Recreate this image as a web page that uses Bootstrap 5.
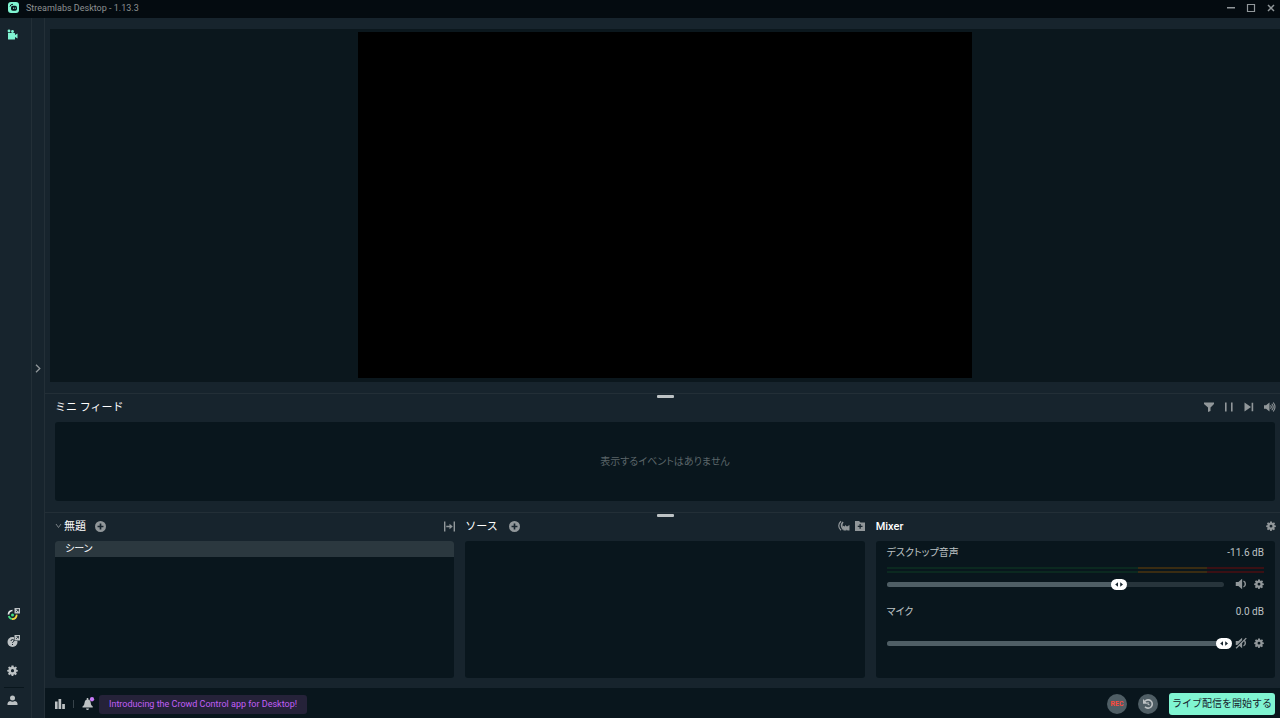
<!DOCTYPE html>
<html lang="ja" data-bs-theme="dark">
<head>
<meta charset="utf-8">
<meta name="viewport" content="width=device-width, initial-scale=1">
<title>Streamlabs Desktop - 1.13.3</title>
<link href="https://cdn.jsdelivr.net/npm/bootstrap@5.3.0/dist/css/bootstrap.min.css" rel="stylesheet">
<style>
:root{--bg:#17242d;--section:#09161d;--line:#232f37;--icon:#91979a;--teal:#80f5d2}
body{background:var(--bg);color:#bdc2c4;font:10px/14px Roboto,"Noto Sans CJK JP",sans-serif;font-feature-settings:"palt"}
svg{display:block;fill:currentColor}
.titlebar{height:18px;background:#040b10;color:#8d9192;padding:0 4px 3px 8px;font-size:9px}
.app-name{margin-left:7px}
.window-buttons{gap:10px}
.icon-btn{border:0;padding:0;background:none;color:var(--icon);display:block;line-height:0}
.icon-btn:hover{color:#fff}
.side-nav{width:32px;border-right:1px solid var(--line);padding:11px 0 12px 7px}
.side-nav .icon-btn{color:#bdc2c4}
.side-nav .icon-btn.current{color:var(--teal)}
.side-nav .lower{gap:13px}
.side-nav hr{width:20px;margin:11px 0 7px -3px;border-top:1px solid #09161d;opacity:1}
.dock{width:13px;border-right:1px solid var(--line)}
.preview{background:#0b171d;margin:11px 0 11px 5px;padding:3px 0 4px}
.screen{height:100%;aspect-ratio:614/346;background:#000}
.panel{border-top:1px solid var(--line);padding:0 5px 0 10px}
.grip{width:17px;height:3px;border-radius:1px;background:#bdc2c4;left:50%;top:1px;margin-left:-6px}
.panel-head{height:28px;padding-bottom:2px;margin-right:-1px}
.panel-head h2{font-size:11px;line-height:16px;margin:0;padding-top:2px;color:#fff;font-weight:400;font-feature-settings:normal}
.panel-head h2.latin{font-weight:500}
.feed-tools{gap:8px}
.box{background:var(--section);border-radius:3px}
.feed{height:79px;color:#5b6569}
.docks{gap:11px;margin-top:11px;padding-bottom:10px}
.docks>section{flex:1 1 0;min-width:0}
.docks .box{height:137px}
.scene-item{display:block;background:#2b383f;color:#fff;padding:0 10px;line-height:16px;text-decoration:none;border-radius:3px 3px 0 0}
.mixer{padding:5px 11px 0}
.meters{display:grid;gap:2px;margin:7px 0 5px}
.meter{height:2px;background:linear-gradient(90deg,#0b2920 66.6%,#3a2c12 66.6% 85%,#3a1014 85%)}
.slider-row .icon-btn:nth-child(2){margin:0 7px 0 11px}
.mic-block{margin-top:15px}
.mic-block .slider-row{margin-top:18px}
.level{height:12px}
.level-track{height:5px;border-radius:3px;background:#27343b}
.level-fill{height:5px;border-radius:3px;background:#4f5e65}
.level input{-webkit-appearance:none;appearance:none;background:none;left:-8px;top:0;width:calc(100% + 16px);height:12px;margin:0}
.level input::-webkit-slider-thumb{-webkit-appearance:none;width:16px;height:11px;border-radius:6px;background:#fff url("data:image/svg+xml,%3Csvg xmlns='http://www.w3.org/2000/svg' width='16' height='11'%3E%3Cpath fill='%2317242d' d='M7 3.2v4.6L4.2 5.5zM9.2 3.2v4.6L12 5.5z'/%3E%3C/svg%3E") center no-repeat}
.level input::-moz-range-thumb{width:16px;height:11px;border:0;border-radius:6px;background:#fff}
.bottom-bar{background:var(--section);padding:2px 5px 0 10px;height:30px}
.bottom-bar .icon-btn{color:#bdc2c4}
.news{background:#252239;color:#c15ff7;border-radius:3px;font-size:9px;line-height:19px;padding:0 10px;margin-left:4px;text-decoration:none}
.sep{width:1px;height:8px;background:#37434a}
.round-btn{width:20px;height:20px;border:0;padding:0;border-radius:50%;background:#4f5e65;color:#bdc2c4}
.round-btn.rec{color:#ff4a3c;font-size:7px;font-weight:700;line-height:20px}
.round-btn.replay{margin:0 11px}
.live-btn{height:22px;background:var(--teal);color:#17242d;border:0;border-radius:3px;padding:0 3px;line-height:22px}
</style>
</head>
<body class="vh-100 d-flex flex-column overflow-hidden">
<svg width="0" height="0" class="position-absolute" aria-hidden="true">
<symbol id="gear" viewBox="0 0 16 16"><path fill-rule="evenodd" d="M6.500 .8h3l.4 2 1.200.5L12.800 2.100 14.500 3.800l-1.300 1.800.5 1.200 2 .3v2.400l-2 .4-.5 1.200 1.200 1.800-1.900 1.900-1.800-1.200-1.200.5-.4 1.800H6.700l-.4-1.800-1.200-.5-1.800 1.200-1.900-1.900 1.200-1.800-.5-1.200-1.800-.4V7.100l1.900-.3.500-1.200L1.500 3.800l1.800-1.700 1.800 1.200 1.100-.5zM8 5.900a2.300 2.300 0 1 0 0 4.600 2.300 2.300 0 0 0 0-4.600z"/></symbol>
<symbol id="plus" viewBox="0 0 16 16"><path fill-rule="evenodd" d="M8 0a8 8 0 1 0 0 16A8 8 0 0 0 8 0zM6.800 3.700h2.400v3.100h3.100v2.400H9.200v3.100H6.800V9.200H3.700V6.800h3.100z"/></symbol>
<symbol id="speaker" viewBox="0 0 16 16"><path d="M1 5.200h3.500L9.500 1v14l-5-4.200H1z"/><path d="M11.300 4.200c3.300 1.200 3.300 6.400 0 7.600" fill="none" stroke="currentColor" stroke-width="1.900"/></symbol>
</svg>

<header class="titlebar d-flex align-items-center">
  <svg width="11" height="11" viewBox="0 0 22 22"><rect width="22" height="22" rx="6" fill="#80f5d2"/><path d="M4 9Q4.500 4.500 10 4.500" fill="none" stroke="#09161d" stroke-width="2"/><rect x="6" y="7.500" width="12" height="10" rx="3.500" fill="#09161d"/><path d="M11 11v3M14.500 11v3" stroke="#80f5d2" stroke-width="1.600"/></svg>
  <span class="app-name">Streamlabs Desktop - 1.13.3</span>
  <div class="window-buttons ms-auto d-flex">
    <button class="icon-btn" aria-label="最小化"><svg width="10" height="10"><path d="M1 4h8v1.500H1z"/></svg></button>
    <button class="icon-btn" aria-label="最大化"><svg width="10" height="10"><path d="M1.500 1.500h7v7h-7z" fill="none" stroke="currentColor" stroke-width="1.200"/></svg></button>
    <button class="icon-btn" aria-label="閉じる"><svg width="10" height="10"><path d="M2 2l6 6M8 2L2 8" stroke="currentColor" stroke-width="1.500"/></svg></button>
  </div>
</header>

<div class="d-flex flex-grow-1" style="min-height:0">
  <nav class="side-nav d-flex flex-column flex-shrink-0">
    <button class="icon-btn current" aria-label="エディター"><svg width="12" height="12" viewBox="0 0 24 24"><circle cx="4" cy="4" r="2.800"/><circle cx="11" cy="5" r="2.800"/><path d="M2 8h13q1 0 1 1v3l5-3v10l-5-3v4q0 1-1 1H3q-1 0-1-1z"/></svg></button>
    <div class="lower mt-auto d-flex flex-column align-items-start">
      <button class="icon-btn" aria-label="ダッシュボード"><svg width="14" height="14" viewBox="0 0 28 28"><path d="M3 15a8.500 8.500 0 0 1 8-8" fill="none" stroke="#e8eaea" stroke-width="3.500"/><path d="M3.500 18a8.500 8.500 0 0 0 7 6" fill="none" stroke="#42df80" stroke-width="3.500"/><path d="M10 24.200c5 0 9-3 9.500-9" fill="none" stroke="#f5d640" stroke-width="3.500"/><circle cx="11" cy="16" r="3" fill="#42df80"/><path d="M15 2h11v11H15z"/><path d="M18 10l5-5M19 5h4v4" fill="none" stroke="#17242d" stroke-width="1.500"/></svg></button>
      <button class="icon-btn" aria-label="ヘルプ"><svg width="14" height="14" viewBox="0 0 28 28"><circle cx="11" cy="16" r="10"/><path d="M8 14q0-3 3-3t3 2.500q0 1.500-3 3.500v1M11 20v2" fill="none" stroke="#17242d" stroke-width="2"/><path d="M14 1h13v13H14z" fill="#17242d"/><path d="M15 2h11v11H15z"/><path d="M18 10l5-5M19 5h4v4" fill="none" stroke="#17242d" stroke-width="1.500"/></svg></button>
      <button class="icon-btn mt-1" aria-label="設定"><svg width="11" height="11"><use href="#gear"/></svg></button>
    </div>
    <hr>
    <button class="icon-btn" aria-label="アカウント"><svg width="11" height="11" viewBox="0 0 22 22"><circle cx="11" cy="6" r="5"/><path d="M1 20v-3q0-4 5-5 5 3 10 0 5 1 5 5v3z"/></svg></button>
  </nav>
  <aside class="dock d-flex align-items-center justify-content-center flex-shrink-0">
    <button class="icon-btn" aria-label="開く"><svg width="6" height="9"><path d="M1 .8l3.800 3.700L1 8.200" fill="none" stroke="currentColor" stroke-width="1.300"/></svg></button>
  </aside>

  <main class="flex-grow-1 d-flex flex-column" style="min-width:0">
    <section class="preview flex-grow-1 d-flex justify-content-center" style="min-height:0"><div class="screen"></div></section>

    <section class="panel position-relative">
      <span class="grip position-absolute"></span>
      <div class="panel-head d-flex align-items-center">
        <h2>ミニ フィード</h2>
        <div class="feed-tools ms-auto d-flex">
          <button class="icon-btn" aria-label="フィルター"><svg width="12" height="12" viewBox="0 0 24 24"><path d="M2 3h20v3l-7 7v7l-5 2v-9L2 6z"/></svg></button>
          <button class="icon-btn" aria-label="一時停止"><svg width="12" height="12"><path d="M2 1.500h1.600v9H2zM8 1.500h1.600v9H8z"/></svg></button>
          <button class="icon-btn" aria-label="スキップ"><svg width="12" height="12"><path d="M1.500 1.500L8 6l-6.500 4.500zM8.600 1.800h1.600v8.400H8.600z"/></svg></button>
          <button class="icon-btn" aria-label="ミュート"><svg width="13" height="12" viewBox="0 0 26 24"><path d="M2 8.500h4l7-5.500v18l-7-5.500H2z"/><path d="M15 8.500q3 3.500 0 7M17.500 5.500q6 6.500 0 13M20.500 3q7 9 0 18" fill="none" stroke="currentColor" stroke-width="2.200"/></svg></button>
        </div>
      </div>
      <div class="box feed d-flex align-items-center justify-content-center">表示するイベントはありません</div>
    </section>

    <div class="panel docks d-flex position-relative">
      <span class="grip position-absolute"></span>
      <section>
        <div class="panel-head d-flex align-items-center">
          <button class="icon-btn" aria-label="シーンコレクション"><svg width="7" height="6"><path d="M1 1l2.500 3.500L6 1" fill="none" stroke="currentColor" stroke-width=".8"/></svg></button>
          <h2 style="margin:0 9px 0 2px">無題</h2>
          <button class="icon-btn" aria-label="シーンを追加"><svg width="11" height="11"><use href="#plus"/></svg></button>
          <button class="icon-btn ms-auto" aria-label="切り替え効果"><svg width="11" height="11" viewBox="0 0 22 22"><path d="M0 1h2.800v20H0zM19.200 1H22v20h-2.800zM4.500 9.600h6.500V5.500l6.500 5.500-6.500 5.500v-4.100H4.500z"/></svg></button>
        </div>
        <div class="box"><a class="scene-item" href="#">シーン</a></div>
      </section>
      <section>
        <div class="panel-head d-flex align-items-center">
          <h2 style="margin-right:11px">ソース</h2>
          <button class="icon-btn" aria-label="ソースを追加"><svg width="11" height="11"><use href="#plus"/></svg></button>
          <button class="icon-btn ms-auto me-1" aria-label="選択的録画"><svg width="13" height="12" viewBox="0 0 26 24"><path d="M8 2.500q-9 8.500 0 18" fill="none" stroke="currentColor" stroke-width="2.400"/><path d="M12 4q-6 7 1 15" fill="none" stroke="currentColor" stroke-width="3.200"/><path d="M11 11l5 2v-3l4 3 5-3v11h-4l-2-2v2h-6z"/></svg></button>
          <button class="icon-btn" aria-label="グループを追加"><svg width="12" height="12" viewBox="0 0 24 24"><path fill-rule="evenodd" d="M2 2h8l3 3h9v17H2zm9 6v3.500H7.500v2.500H11v3.500h2.500V14H17v-2.500h-3.500V8z"/></svg></button>
        </div>
        <div class="box"></div>
      </section>
      <section>
        <div class="panel-head d-flex align-items-center">
          <h2 class="latin">Mixer</h2>
          <button class="icon-btn ms-auto" aria-label="ミキサー設定"><svg width="10" height="10"><use href="#gear"/></svg></button>
        </div>
        <div class="box mixer">
          <div>
            <div class="d-flex justify-content-between"><label for="desk">デスクトップ音声</label><span>-11.6 dB</span></div>
            <div class="meters"><div class="meter"></div><div class="meter"></div></div>
            <div class="slider-row d-flex align-items-center">
              <div class="level flex-grow-1 position-relative d-flex flex-column justify-content-center">
                <div class="level-track"><div class="level-fill" style="width:69%"></div></div>
                <input class="position-absolute" id="desk" type="range" min="0" max="100" value="69">
              </div>
              <button class="icon-btn" aria-label="ミュート"><svg width="12" height="12"><use href="#speaker"/></svg></button>
              <button class="icon-btn" aria-label="設定"><svg width="10" height="10"><use href="#gear"/></svg></button>
            </div>
          </div>
          <div class="mic-block">
            <div class="d-flex justify-content-between"><label for="mic">マイク</label><span>0.0 dB</span></div>
            <div class="slider-row d-flex align-items-center">
              <div class="level flex-grow-1 position-relative d-flex flex-column justify-content-center">
                <div class="level-track"><div class="level-fill" style="width:100%"></div></div>
                <input class="position-absolute" id="mic" type="range" min="0" max="100" value="100">
              </div>
              <button class="icon-btn" aria-label="ミュート解除"><svg width="12" height="12" viewBox="0 0 16 16"><use href="#speaker"/><path d="M1 14L14 1" stroke="#09161d" stroke-width="2"/><path d="M1.500 15L15 1.500" stroke="currentColor" stroke-width="1.800"/></svg></button>
              <button class="icon-btn" aria-label="設定"><svg width="10" height="10"><use href="#gear"/></svg></button>
            </div>
          </div>
        </div>
      </section>
    </div>

    <footer class="bottom-bar d-flex align-items-center flex-shrink-0">
      <button class="icon-btn" aria-label="統計"><svg width="10" height="10"><path d="M0 2.500h2.600v7.500H0zM3.500 0h2.700v10H3.500zM7.200 5h2.700v5H7.200z"/></svg></button>
      <span class="sep mx-2"></span>
      <button class="icon-btn" aria-label="通知"><svg width="13" height="14" viewBox="0 0 26 28"><path d="M9.500 2h3v3q5 1 5 7 0 5 4 7v2H1v-2q4-2 4-7 0-6 4.500-7zM8 23h6q-.5 3-3 3t-3-3z"/><circle cx="20" cy="4.500" r="4.300" fill="#c97bf8"/></svg></button>
      <a class="news" href="#">Introducing the Crowd Control app for Desktop!</a>
      <button class="round-btn rec ms-auto">REC</button>
      <button class="round-btn replay d-flex align-items-center justify-content-center" aria-label="リプレイバッファ"><svg width="12" height="12" viewBox="0 0 24 24"><path d="M6 6.500a8.300 8.300 0 1 1 0 11" fill="none" stroke="currentColor" stroke-width="3.200"/><path d="M2 2v9.500h9.500z"/><path d="M12 8v4.500l3 1.500" fill="none" stroke="currentColor" stroke-width="2.200"/></svg></button>
      <button class="live-btn">ライブ配信を開始する</button>
    </footer>
  </main>
</div>
<script src="https://cdn.jsdelivr.net/npm/bootstrap@5.3.0/dist/js/bootstrap.bundle.min.js"></script>
</body>
</html>
